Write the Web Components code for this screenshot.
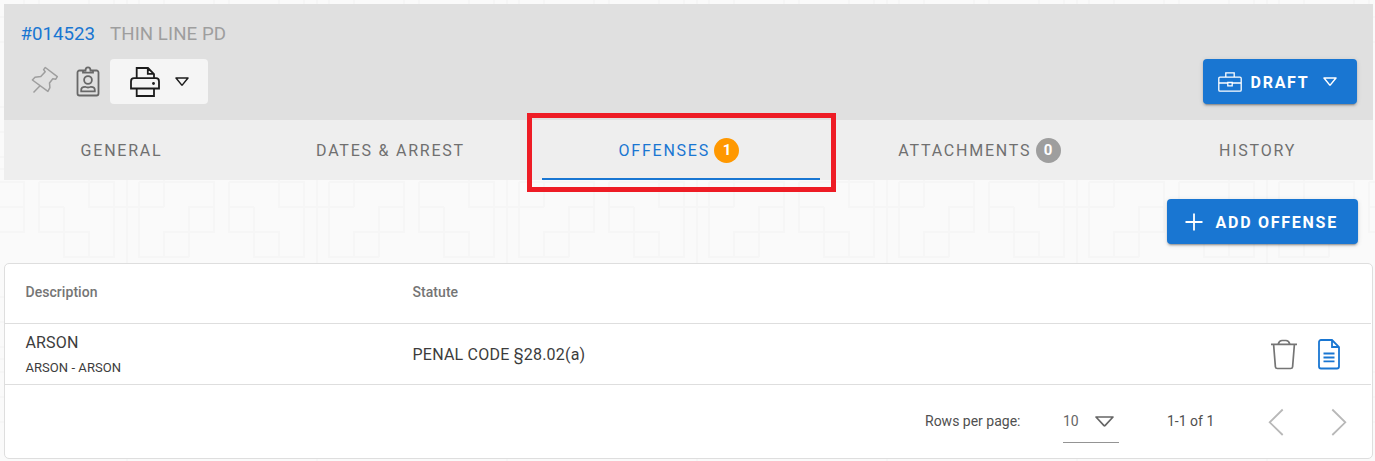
<!DOCTYPE html>
<html lang="en"><head><meta charset="utf-8"><title>Offenses</title>
<style>
html,body{margin:0;height:461px;overflow:hidden}
body{font-family:Roboto,sans-serif;background:#fafafa}
</style></head><body><offense-page></offense-page>
<script>
const define=(name,html)=>{
  const t=document.createElement('template');t.innerHTML=html;
  customElements.define(name,class extends HTMLElement{
    constructor(){super();this.attachShadow({mode:'open'}).append(t.content.cloneNode(true));}
  });
};
const paths={
  pin:['0 0 28 28','<path stroke-width="1.5" stroke-linejoin="round" d="M14.3 1.5 26.3 10.6 24.8 13.2 21.8 12.7 18.5 17 18.9 21.6 16.9 25.4 1.4 14 4 11.2 9.8 10.6 14.2 5.8 12.6 3.6Z M8.8 20 2.5 26.5"/>'],
  badge:['0 0 24 31','<path stroke-width="1.8" d="M7 4.5H3.5A2 2 0 0 0 1.5 6.5V27.5A2 2 0 0 0 3.5 29.5H20.5A2 2 0 0 0 22.5 27.5V6.5A2 2 0 0 0 20.5 4.5H17M7 4.5V6.7H17V4.5H14.5C14.5 .2 9.5 .2 9.5 4.5Z"/><circle cx="12" cy="14" r="3.9" stroke-width="1.8"/><path stroke-width="1.8" d="M5.2 25.3V24C5.2 21.8 7 20.8 9 20.8 11 21.7 13 21.7 15 20.8 17 20.8 18.8 21.8 18.8 24V25.3Z"/>'],
  print:['0 0 30 30','<path stroke-width="1.8" d="M6.7 11V1H18L24 7V11M17.8 1.5V6.8H23.8M4 11.2H26C28 11.2 29 12.5 29 14.5V21.5H1V14.5C1 12.5 2 11.2 4 11.2ZM6.7 22V29H24V22"/><circle cx="23.5" cy="16.5" r="1.4" fill="currentColor" stroke="none"/>'],
  caret:['0 0 14 9','<path stroke-width="1.5" stroke-linejoin="round" d="M1 1H13L7.6 7.6Q7 8.2 6.4 7.6Z"/>'],
  caretbig:['0 0 19 11','<path stroke-width="1.7" stroke-linejoin="round" d="M1 1H18L10 9.6Q9.5 10 9 9.6Z"/>'],
  brief:['0 0 24 20','<path stroke-width="1.3" d="M2 5.2H22A1.2 1.2 0 0 1 23.2 6.4V18A1.2 1.2 0 0 1 22 19.2H2A1.2 1.2 0 0 1 .8 18V6.4A1.2 1.2 0 0 1 2 5.2ZM7.8 5V.8H16.2V5M1 11H9.8M14.2 11H23M9.8 10.5H14.2V13.8H9.8Z"/>'],
  plus:['0 0 18 18','<path stroke-width="1.8" d="M9 .5V17.5M.5 9H17.5"/>'],
  trash:['0 0 26 31','<path stroke-width="1.7" d="M0 5.3H26M7.2 5C8 2.5 9 1.5 11 1.5H15C17 1.5 18 2.5 18.8 5M2.6 5.5 4.4 27.8Q4.6 29.5 6.4 29.5H19.6Q21.4 29.5 21.6 27.8L23.4 5.5"/>'],
  doc:['0 0 22 31','<path stroke-width="1.8" d="M14 1H3A2 2 0 0 0 1 3V27.5A2 2 0 0 0 3 29.5H19A2 2 0 0 0 21 27.5V8ZM14 1.5V8H20.8M5.5 14.5H16.5M5.5 18.5H16.5M5.5 22.3H16.5"/>'],
  prev:['0 0 16 28','<path stroke-width="1.8" d="M14.7 1.5 1.7 14.3 14.7 27"/>'],
  next:['0 0 16 28','<path stroke-width="1.8" d="M1.3 1.5 14.3 14.3 1.3 27"/>']
};
customElements.define('ui-icon',class extends HTMLElement{
  constructor(){super();this.attachShadow({mode:'open'});}
  connectedCallback(){const [box,body]=paths[this.getAttribute('name')];
    this.shadowRoot.innerHTML=`<style>:host{display:block;flex:none}svg{display:block;width:100%;height:100%}</style><svg viewBox="${box}" fill="none" stroke="currentColor" stroke-width="1.3">${body}</svg>`;}
});
define('action-button',`<style>
:host{display:flex;align-items:center;box-sizing:border-box;height:45px;border-radius:4px;background:#1976d2;color:#fff;font-weight:700;font-size:16px;letter-spacing:1.74px;white-space:nowrap;box-shadow:0 3px 1px -2px rgba(0,0,0,.2),0 2px 2px rgba(0,0,0,.14),0 1px 5px rgba(0,0,0,.12)}
:host([plain]){background:#f5f5f5;color:#1c1c1c;box-shadow:none}
</style><slot></slot>`);
define('count-badge',`<style>:host{display:flex;align-items:center;justify-content:center;width:25px;height:25px;border-radius:50%;background:#9e9e9e;color:#fff;font-weight:700;font-size:15px;letter-spacing:0;margin-left:4.5px}:host([warn]){background:#ff9800}</style><slot></slot>`);
define('tab-item',`<style>:host{display:flex;align-items:center;justify-content:center;box-sizing:border-box;height:60px;color:#707070;font-size:16px;font-weight:400;letter-spacing:1.77px;white-space:nowrap;border-bottom:2px solid transparent;padding:2px 0 0 1px}:host([active]){color:#1976d2;border-color:#1976d2;padding-right:5px}:host(:last-of-type){padding-left:4px}</style><slot></slot>`);
define('record-header',`<style>
:host{display:block;background:#e0e0e0;height:116px;box-sizing:border-box;padding:17px 16px 0 16.5px}
.title{display:flex;gap:15px;height:26px;line-height:26px;font-size:18.7px;color:#9e9e9e}.title b{font-weight:400;color:#1976d2}.title span{letter-spacing:.06px}
.tools{display:flex;align-items:center;height:45px;margin-top:12px}
.pin{width:28px;height:28px;margin-left:10.5px;color:#9e9e9e;margin-top:-4px}.id{width:24px;height:31px;margin-left:17px;color:#686868}
.pr{width:98px;margin-left:10px;padding-left:20px}.draft{width:154px;margin-left:auto;padding-left:15px}
</style><div class="title"><b>#014523</b><span>THIN LINE PD</span></div>
<div class="tools"><ui-icon class="pin" name="pin"></ui-icon><ui-icon class="id" name="badge"></ui-icon>
<action-button plain class="pr"><ui-icon name="print" style="width:30px;height:30px"></ui-icon><ui-icon name="caret" style="width:14px;height:9px;margin-left:15px"></ui-icon></action-button>
<action-button class="draft"><ui-icon name="brief" style="width:24px;height:20px"></ui-icon><span style="margin:2px 0 0 8.5px;width:58.5px">DRAFT</span><ui-icon name="caret" style="width:14px;height:9px;margin-left:14px"></ui-icon></action-button></div>`);
define('tab-bar',`<style>:host{display:grid;grid-template-columns:234px 304px 278px 318px 235px;background:#eee;position:relative}
.mark{position:absolute;box-sizing:border-box;left:523px;top:-7px;width:309px;height:79px;border:5px solid #ee1c25}</style><slot></slot><div class="mark"></div>`);
define('offense-table',`<style>
:host{display:block;box-sizing:border-box;height:196px;background:#fff;border:1px solid #dedede;border-radius:5px;color:#3c3c3c}
.row{display:grid;grid-template-columns:387px 1fr auto;align-items:center;padding:0 31px 0 20.5px;box-sizing:border-box;border-bottom:1px solid #dedede;margin-right:1px}
.head{height:60px;font-size:14px;font-weight:500;color:#757575;padding-bottom:3px;letter-spacing:.05px}
.body{height:61px;font-size:16px}.body .st{letter-spacing:.22px}
.sub{font-size:13px;line-height:18px;margin-top:6px;letter-spacing:.05px}.main{line-height:20px;padding-top:1px;letter-spacing:.15px}
.icons{display:flex;gap:21px;align-items:center}
.foot{display:flex;height:73px;align-items:center;font-size:14px;padding-left:920px;color:#505050;white-space:nowrap}
.foot>span{padding-bottom:1px}
.sel{display:flex;box-sizing:border-box;width:56px;height:44px;border-bottom:1px solid #949494;margin:0 0 2px 42px;padding-top:2px;align-items:center;color:#666}
</style>
<div class="row head"><span>Description</span><span>Statute</span></div>
<div class="row body"><div><div class="main">ARSON</div><div class="sub">ARSON - ARSON</div></div><span class="st">PENAL CODE §28.02(a)</span><div class="icons"><ui-icon name="trash" style="width:26px;height:31px;color:#757575"></ui-icon><ui-icon name="doc" style="width:22px;height:31px;color:#1976d2"></ui-icon></div></div>
<div class="foot"><span style="width:96px">Rows per page:</span><div class="sel"><span style="width:32px">10</span><ui-icon name="caretbig" style="width:19px;height:11px"></ui-icon></div><span style="margin-left:48px;width:47px">1-1 of 1</span><ui-icon name="prev" style="width:16px;height:28px;margin-left:54px;color:#b8b8b8"></ui-icon><ui-icon name="next" style="width:16px;height:28px;margin-left:47px;color:#b8b8b8"></ui-icon></div>`);
define('page-backdrop',`<style>:host{display:block;position:absolute;inset:0;z-index:-1}svg{display:block}</style>
<svg width="1375" height="461"><defs><pattern id="p" width="190" height="190" x="38" y="180" patternUnits="userSpaceOnUse"><path fill="none" stroke="#f6f6f6" stroke-width="2" d="M1 2H76V77H26V27M1 27H26M1 2V52H51V77M51 0V27H126M89 0V190M101 2H176V52H126V77H101V2M126 0V27M151 77V27H176M151 77H126M1 52H51M126 52H176M151 117H176M151 142H176M151 167H176M151 179H176"/></pattern></defs><rect width="1375" height="461" fill="url(#p)"/></svg>`);
define('offense-page',`<style>:host{display:block;position:relative;z-index:0;width:1375px;height:461px;box-sizing:border-box;padding:4px 2px 0 4px}
.bar{display:flex;justify-content:flex-end;box-sizing:border-box;height:83px;padding:19px 15px 0}.add{width:191px;padding-left:17.5px}</style>
<page-backdrop></page-backdrop><record-header></record-header>
<tab-bar><tab-item>GENERAL</tab-item><tab-item>DATES &amp; ARREST</tab-item><tab-item active>OFFENSES<count-badge warn>1</count-badge></tab-item><tab-item>ATTACHMENTS<count-badge>0</count-badge></tab-item><tab-item>HISTORY</tab-item></tab-bar>
<div class="bar"><action-button class="add"><ui-icon name="plus" style="width:18px;height:18px"></ui-icon><span style="margin:2px 0 0 13px">ADD OFFENSE</span></action-button></div>
<offense-table></offense-table>`);
</script></body></html>
